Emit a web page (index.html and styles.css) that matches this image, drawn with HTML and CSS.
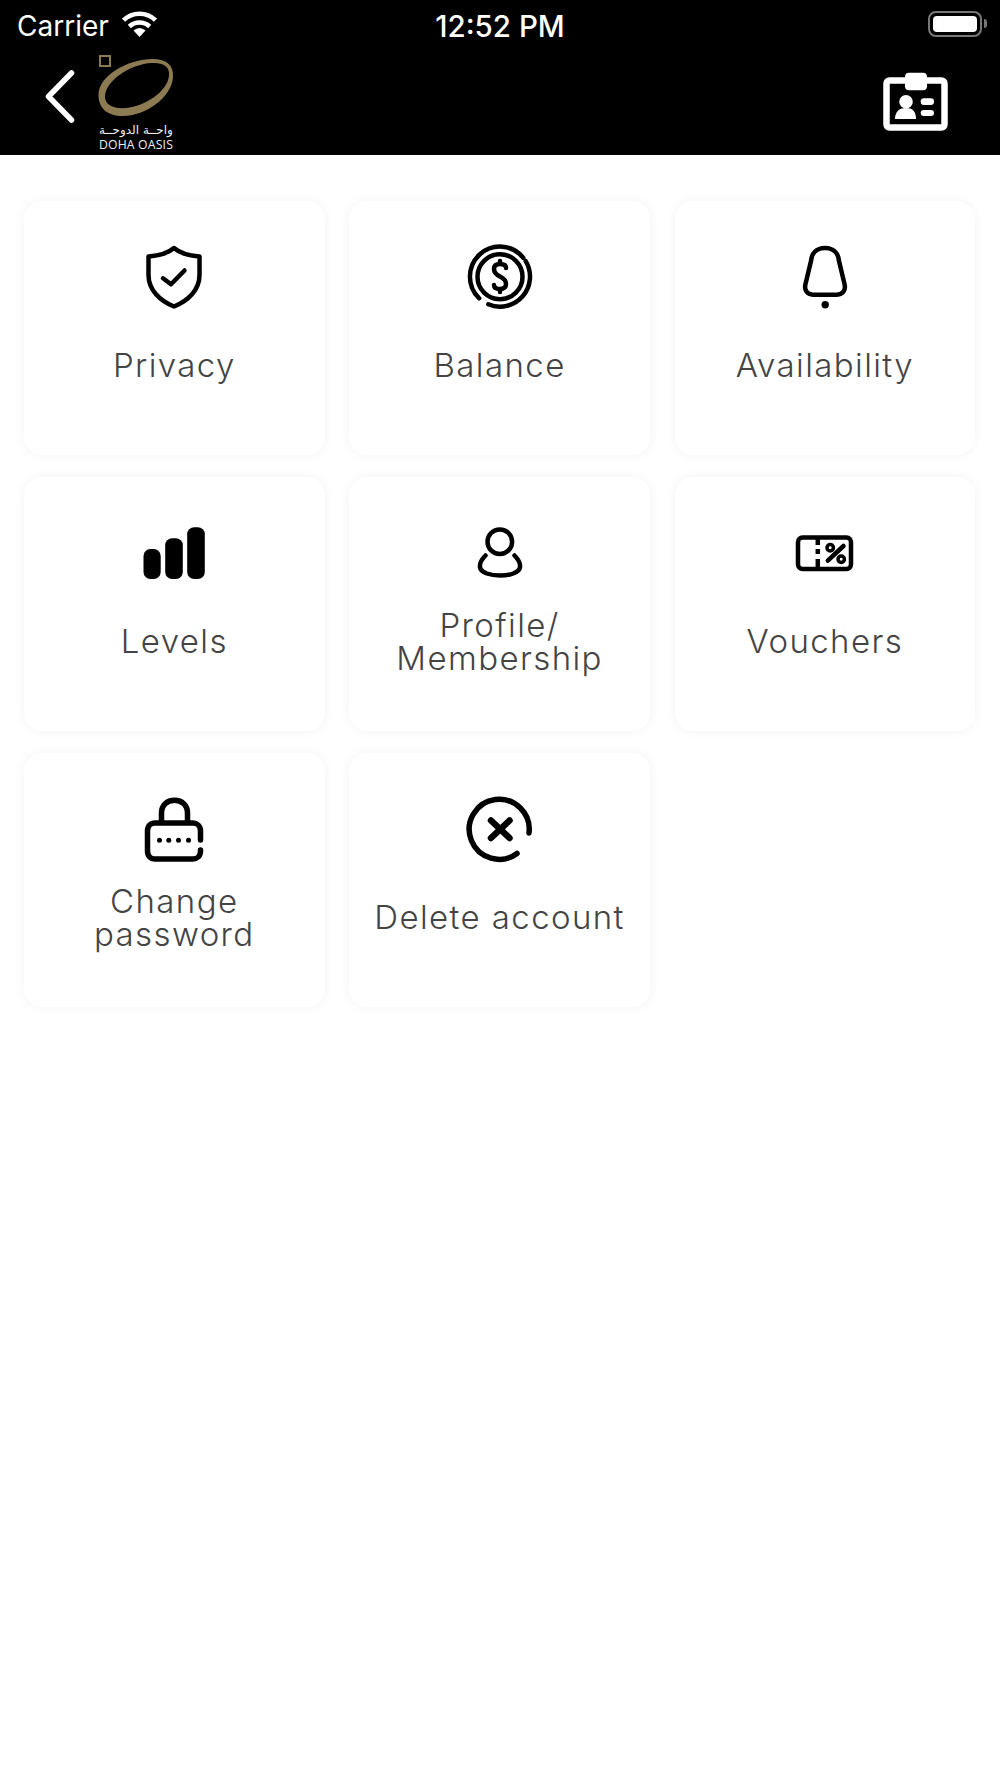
FILE: index.html
```html
<!DOCTYPE html>
<html>
<head>
	<meta charset="UTF-8">
	<title>Doha Oasis</title>
	<link rel="stylesheet" href="styles.css">
</head>
<body>
	<header class="top">
		<div class="status">
			<div class="status-left">
				<span>Carrier</span>
				<svg class="wifi" viewBox="0 0 37 26" width="37" height="26">
					<path class="wifi-arc" d="M2.5 9.2A23 23 0 0 1 34.5 9.2"/>
					<path class="wifi-arc" d="M8.3 15.5A15 15 0 0 1 28.7 15.5"/>
					<path class="fill-white" d="M18.5 26L12.5 19.5Q18.5 14.5 24.5 19.5Z"/>
				</svg>
			</div>
			<div class="clock">12:52 PM</div>
			<div class="status-right">
				<div class="battery"><div class="battery-level"></div></div>
				<div class="battery-nub"></div>
			</div>
		</div>
		<nav class="nav">
			<svg class="back" viewBox="0 0 30 54" width="30" height="54">
				<path d="M26.5 3L3.5 26.5L26.5 50"/>
			</svg>
			<div class="logo">
				<svg class="logo-mark" viewBox="0 0 76 64" width="76" height="64">
					<rect class="logo-square" x="2" y="1" width="10" height="10"/>
					<path class="logo-ring" fill-rule="evenodd" d="M0.5 40C0.5 21 29 4 55 4C68 4 76 10 75 22C74 42 48 61 25 61C9 61 0.5 53 0.5 40ZM7 42C7 50 16 54 28 53C47 51 69 37 71 21C72 11 65 7.5 54 8C32 9 7 26 7 42Z"/>
				</svg>
				<div class="logo-ar">واحــة الدوحــة</div>
				<div class="logo-en">DOHA OASIS</div>
			</div>
			<svg class="badge" viewBox="0 0 65 60" width="65" height="60">
				<rect class="badge-frame" x="3.5" y="8.5" width="58" height="47" rx="3"/>
				<rect class="fill-white" x="22" y="0.7" width="22" height="17.5" rx="4"/>
				<circle class="fill-white" cx="23" cy="29.7" r="6.8"/>
				<path class="fill-white" d="M12 47C12 39 17 36 23 36C29 36 33 39 33 47Z"/>
				<rect class="fill-white" x="37.7" y="26.3" width="13.3" height="6.7" rx="3.3"/>
				<rect class="fill-white" x="37.7" y="38" width="13.3" height="6" rx="3"/>
			</svg>
		</nav>
	</header>

	<main class="menu">
		<div class="card">
			<svg class="icon" viewBox="0 0 70 70">
				<path d="M35 7C30 11.5 22 14.5 9.5 15.5V34C9.5 49 21 60 35 65.5C49 60 60.5 49 60.5 34V15.5C48 14.5 40 11.5 35 7Z"/>
				<path d="M24 37.3L32 43.3L45.5 29.5"/>
			</svg>
			<div class="label">Privacy</div>
		</div>
		<div class="card">
			<svg class="icon" viewBox="0 0 70 70">
				<path d="M14.2 57.3A30 30 0 1 1 58.3 16.8"/>
				<path d="M60.7 20.2A30 30 0 0 1 23.3 63.3"/>
				<circle cx="35" cy="35.7" r="22.5"/>
				<path d="M41 27C41 24 38 23 35 23C31 23 29 25 29 28C29 32 32 34 35 35.5C38 37 41 39 41 43C41 46 39 48 35 48C32 48 29 47 29 44M35 20V23M35 48V51"/>
			</svg>
			<div class="label">Balance</div>
		</div>
		<div class="card">
			<svg class="icon" viewBox="0 0 70 70">
				<path d="M35 7C26 7 21.5 13 21 20L15.5 43C14 49 17 53.7 23 53.7H47C53 53.7 56 49 54.5 43L49 20C48.5 13 44 7 35 7Z"/>
				<circle class="solid" cx="35.2" cy="63.7" r="3.7"/>
			</svg>
			<div class="label">Availability</div>
		</div>
		<div class="card">
			<svg class="icon" viewBox="0 0 70 70">
				<rect class="solid" x="4.5" y="32" width="17.2" height="30" rx="7"/>
				<rect class="solid" x="26.2" y="21.3" width="17.6" height="40.7" rx="7"/>
				<rect class="solid" x="48.2" y="10.3" width="17.6" height="51.7" rx="7"/>
			</svg>
			<div class="label">Levels</div>
		</div>
		<div class="card">
			<svg class="icon" viewBox="0 0 70 70">
				<circle cx="34.8" cy="24.7" r="12.3"/>
				<path d="M20.5 38.5C17 42 14.5 46 15 50C15.5 56 26 58.5 35 58.5C44 58.5 54.5 56 55 50C55.5 46 53 42 49.5 38.5"/>
			</svg>
			<div class="label">Profile/<br>Membership</div>
		</div>
		<div class="card">
			<svg class="icon" viewBox="0 0 70 70">
				<rect x="8" y="20.5" width="53" height="31.5" rx="4.5"/>
				<path class="butt" d="M27.8 20V28M27.8 32V37M27.8 42V52"/>
				<circle class="thin" cx="40.2" cy="30.7" r="3.2"/>
				<circle class="thin" cx="51.2" cy="42.3" r="3.2"/>
				<path d="M37.8 43.7L53.5 29"/>
			</svg>
			<div class="label">Vouchers</div>
		</div>
		<div class="card">
			<svg class="icon" viewBox="0 0 70 70">
				<path class="heavy" d="M22.5 28V20C22.5 12 28 7.3 35.5 7.3C43 7.3 48.5 12 48.5 20V28"/>
				<path class="heavy" d="M61.5 47V38C61.5 33 58 30 54 30H16C11.5 30 8.5 33 8.5 38V58C8.5 63 11.5 66 16 66H54C58 66 61.5 63 61.5 58V57"/>
				<circle class="solid" cx="20.5" cy="47.3" r="2.5"/>
				<circle class="solid" cx="29.8" cy="47.3" r="2.5"/>
				<circle class="solid" cx="39.5" cy="47.3" r="2.5"/>
				<circle class="solid" cx="49.5" cy="47.3" r="2.5"/>
			</svg>
			<div class="label">Change<br>password</div>
		</div>
		<div class="card">
			<svg class="icon" viewBox="0 0 70 70">
				<path class="heavy" d="M64 40A30 30 0 1 0 52 60.5"/>
				<path class="cross" d="M26 27.5L44.5 45M44.5 27.5L26 45"/>
			</svg>
			<div class="label">Delete account</div>
		</div>
	</main>
</body>
</html>
```

FILE: styles.css
```css
* {
	box-sizing: border-box;
}

body {
	margin: 0;
	background-color: #fff;
	font-family: Inter, "Liberation Sans", sans-serif;
}

.top {
	height: 155px;
	background-color: #000;
	color: #fff;
}

.status {
	display: grid;
	grid-template-columns: 1fr auto 1fr;
	align-items: center;
	height: 50px;
	padding: 1px 13px 0 17px;
	font-size: 28px;
}

.status-left {
	display: flex;
	align-items: center;
	gap: 12px;
}

.wifi {
	margin-top: -4px;
}

.wifi-arc {
	fill: none;
	stroke: #fff;
	stroke-width: 4.5;
}

.fill-white {
	fill: #fff;
}

.clock {
	margin-right: 4px;
	font-size: 29.5px;
	font-weight: 500;
}

.status-right {
	display: flex;
	align-items: center;
	justify-content: flex-end;
	gap: 2px;
	margin-top: -4px;
}

.battery {
	width: 54px;
	height: 26px;
	padding: 3px;
	border: 2.5px solid #777;
	border-radius: 8px;
}

.battery-level {
	height: 100%;
	background-color: #fff;
	border-radius: 4px;
}

.battery-nub {
	width: 3px;
	height: 9px;
	background-color: #777;
	border-radius: 0 3px 3px 0;
}

.nav {
	display: flex;
	align-items: flex-start;
	padding: 5px 52px 0 45px;
}

.back {
	margin-top: 15px;
	fill: none;
	stroke: #fff;
	stroke-width: 5.5;
	stroke-linecap: round;
	stroke-linejoin: round;
}

.logo {
	width: 76px;
	margin-left: 23px;
	color: #f0f0f0;
	text-align: center;
}

.logo-mark {
	display: block;
}

.logo-square {
	fill: none;
	stroke: #8c7a52;
	stroke-width: 2;
}

.logo-ring {
	fill: #8c7a52;
}

.logo-ar {
	margin-top: 3px;
	font-family: "DejaVu Sans", sans-serif;
	font-size: 12px;
	line-height: 16px;
	white-space: nowrap;
}

.logo-en {
	font-family: "Open Sans", sans-serif;
	font-size: 12.2px;
	line-height: 14px;
	letter-spacing: 0.2px;
	white-space: nowrap;
}

.badge {
	margin-top: 17px;
	margin-left: auto;
}

.badge-frame {
	fill: none;
	stroke: #fff;
	stroke-width: 6.5;
}

.menu {
	display: grid;
	grid-template-columns: repeat(3, 300.6px);
	grid-auto-rows: 254px;
	gap: 22px 24.7px;
	padding: 45.5px 24px;
}

.card {
	display: flex;
	flex-direction: column;
	align-items: center;
	padding-top: 40px;
	background-color: #fff;
	border-radius: 18px;
	box-shadow: 0 0 12px rgba(0, 0, 0, 0.05);
}

.icon {
	width: 70px;
	height: 70px;
	fill: none;
	stroke: #000;
	stroke-width: 4.5;
	stroke-linecap: round;
	stroke-linejoin: round;
}

.icon .solid {
	fill: #000;
	stroke: none;
}

.icon .butt {
	stroke-linecap: butt;
}

.icon .thin {
	stroke-width: 3.5;
}

.icon .heavy {
	stroke-width: 5.5;
}

.icon .cross {
	stroke-width: 6.5;
}

.label {
	display: flex;
	align-items: center;
	justify-content: center;
	height: 70px;
	margin-top: 20px;
	color: #444;
	font-size: 33px;
	font-weight: 300;
	letter-spacing: 1.4px;
	line-height: 33px;
	text-align: center;
	white-space: nowrap;
}
```
